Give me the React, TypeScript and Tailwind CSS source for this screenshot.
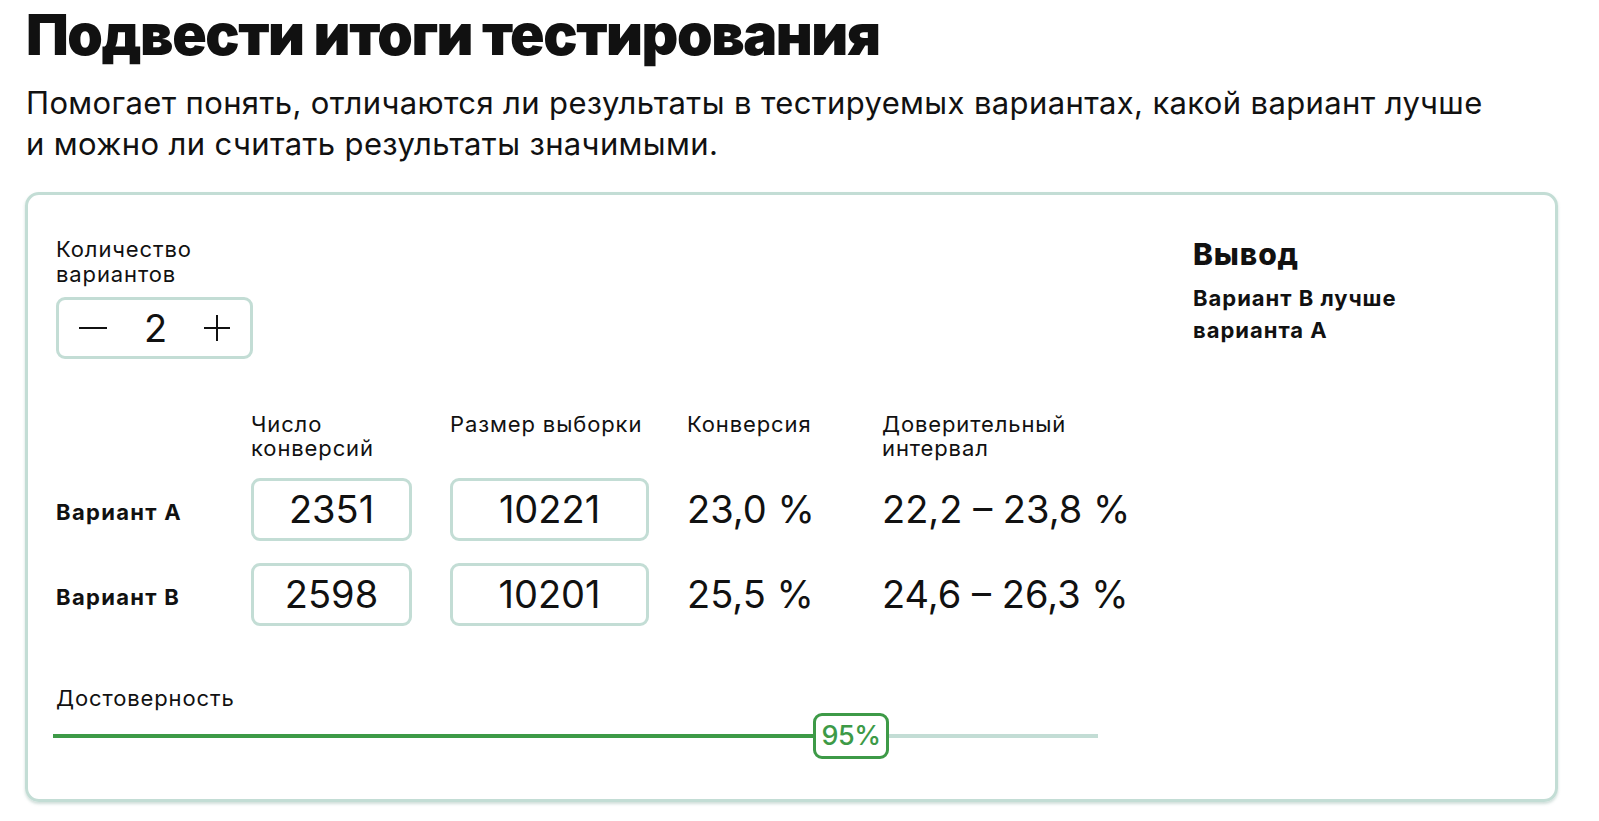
import React from "react";

const rows = [
    { name: "Вариант А", conv: "2351", size: "10221", rate: "23,0 %", ci: "22,2 – 23,8 %" },
    { name: "Вариант В", conv: "2598", size: "10201", rate: "25,5 %", ci: "24,6 – 26,3 %" },
];

const NumBox: React.FC<{ value: string; width: string }> = ({ value, width }) => (
    <div
        className={`${width} h-[63px] border-[3px] border-[#c3ddd5] rounded-[9px] flex items-center justify-center text-[38px] text-[#111]`}
    >
        {value}
    </div>
);

const App: React.FC = () => {
    return (
        <div className="w-[1599px] h-[821px] bg-white font-['Inter',sans-serif] text-[#111] pl-[26px] overflow-hidden">
            <h1 className="text-[57px] leading-[70px] font-black tracking-[-0.025em]">Подвести итоги тестирования</h1>
            <p className="mt-[12px] text-[31px] leading-[41px] tracking-[0.012em] w-[1540px]">
                Помогает понять, отличаются ли результаты в тестируемых вариантах, какой вариант лучше
                <br />
                и можно ли считать результаты значимыми.
            </p>

            <div className="mt-[28px] -ml-[1px] w-[1533px] h-[610px] border-[3px] border-[#c3ddd5] rounded-[14px] shadow-[0_2px_3px_rgba(120,160,150,0.35)] flex pl-[28px] pt-[42px]">
                <div className="w-[1109px] flex flex-col">
                    <div className="text-[22px] leading-[25px] tracking-[0.04em]">
                        Количество
                        <br />
                        вариантов
                    </div>
                    <div className="mt-[10px] w-[197px] h-[62px] border-[3px] border-[#c3ddd5] rounded-[9px] flex items-center justify-between px-[20px] text-[38px]">
                        <span className="w-[28px] h-[2px] bg-[#111]" />
                        <span>2</span>
                        <span className="relative w-[26px] h-[26px] flex items-center justify-center">
                            <span className="w-[26px] h-[2px] bg-[#111]" />
                            <span className="absolute w-[2px] h-[26px] bg-[#111]" />
                        </span>
                    </div>

                    <div className="mt-[53px] grid grid-cols-[157px_161px_199px_157px_auto] gap-x-[38px] items-center text-[22px] leading-[24px] tracking-[0.04em]">
                        <div />
                        <div className="self-start">
                            Число
                            <br />
                            конверсий
                        </div>
                        <div className="self-start whitespace-nowrap">Размер выборки</div>
                        <div className="self-start">Конверсия</div>
                        <div className="self-start">
                            Доверительный
                            <br />
                            интервал
                        </div>
                    </div>

                    <div className="mt-[18px] flex flex-col gap-[22px]">
                        {rows.map((r) => (
                            <div
                                key={r.name}
                                className="grid grid-cols-[157px_161px_199px_157px_auto] gap-x-[38px] items-center"
                            >
                                <div className="pt-[6px] text-[22px] font-bold tracking-[0.06em] whitespace-nowrap">{r.name}</div>
                                <NumBox value={r.conv} width="w-[161px]" />
                                <NumBox value={r.size} width="w-[199px]" />
                                <div className="text-[38px] whitespace-nowrap">{r.rate}</div>
                                <div className="text-[38px] whitespace-nowrap">{r.ci}</div>
                            </div>
                        ))}
                    </div>

                    <div className="mt-[60px] text-[22px] leading-[25px] tracking-[0.04em]">Достоверность</div>
                    <div className="mt-[2px] -ml-[3px] flex items-center">
                        <div className="w-[760px] h-[4px] bg-[#3d9a47]" />
                        <div className="w-[76px] h-[46px] border-[3px] border-[#3d9a47] rounded-[9px] bg-white flex items-center justify-center text-[27px] font-medium text-[#3d9a47] tracking-[-0.02em]">
                            95%
                        </div>
                        <div className="w-[209px] h-[4px] bg-[#c3ddd5]" />
                    </div>
                </div>

                <div className="ml-[28px] pt-[1px]">
                    <div className="text-[30px] leading-[32px] font-extrabold tracking-[0.03em]">Вывод</div>
                    <div className="mt-[12px] text-[22px] leading-[32px] font-bold tracking-[0.045em] whitespace-nowrap">
                        Вариант В лучше
                        <br />
                        варианта А
                    </div>
                </div>
            </div>
        </div>
    );
};

export default App;
